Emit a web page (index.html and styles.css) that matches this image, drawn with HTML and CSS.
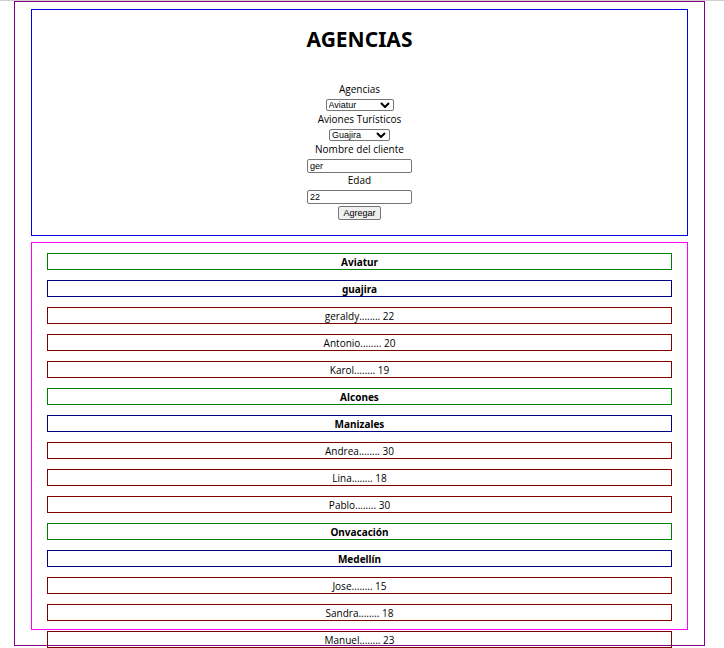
FILE: index.html
```html
<!DOCTYPE html>
<html lang="es">
<head>
  <meta charset="utf-8">
  <title>Agencias</title>
  <link rel="stylesheet" href="styles.css">
</head>
<body>
  <main class="page">
    <section class="panel">
      <h1 class="title">AGENCIAS</h1>
      <form class="form">
        <label class="label" for="agencia">Agencias</label>
        <span class="select-wrap select-agency">
          <select class="select" id="agencia">
            <option selected>Aviatur</option>
            <option>Alcones</option>
            <option>Onvacación</option>
          </select>
          <svg class="chevron" viewBox="0 0 10 6" aria-hidden="true"><path d="M1 1l4 4 4-4"/></svg>
        </span>
        <label class="label" for="avion">Aviones Turísticos</label>
        <span class="select-wrap select-plane">
          <select class="select" id="avion">
            <option selected>Guajira</option>
            <option>Manizales</option>
            <option>Medellín</option>
          </select>
          <svg class="chevron" viewBox="0 0 10 6" aria-hidden="true"><path d="M1 1l4 4 4-4"/></svg>
        </span>
        <label class="label" for="nombre">Nombre del cliente</label>
        <input class="input" id="nombre" type="text" value="ger">
        <label class="label" for="edad">Edad</label>
        <input class="input" id="edad" type="text" value="22">
        <button class="button" type="button">Agregar</button>
      </form>
    </section>
    <section class="list">
      <h2 class="row agency">Aviatur</h2>
      <h3 class="row plane">guajira</h3>
      <p class="row client">geraldy........ 22</p>
      <p class="row client">Antonio........ 20</p>
      <p class="row client">Karol........ 19</p>
      <h2 class="row agency">Alcones</h2>
      <h3 class="row plane">Manizales</h3>
      <p class="row client">Andrea........ 30</p>
      <p class="row client">Lina........ 18</p>
      <p class="row client">Pablo........ 30</p>
      <h2 class="row agency">Onvacación</h2>
      <h3 class="row plane">Medellín</h3>
      <p class="row client">Jose........ 15</p>
      <p class="row client">Sandra........ 18</p>
      <p class="row client">Manuel........ 23</p>
    </section>
  </main>
</body>
</html>
```

FILE: styles.css
```css
* {
  box-sizing: border-box;
}

body {
  min-height: 100vh;
  margin: 0;
  border-top: 1px solid #d0d0d0;
  background: #fff;
  color: #000;
  font-family: "Open Sans", "Noto Sans", sans-serif;
  font-size: 10px;
  line-height: 15px;
  text-align: center;
}

.page {
  display: flex;
  flex-direction: column;
  gap: 6px;
  height: calc(100vh - 3px);
  margin: 0 19px 0 14px;
  padding: 7px 16px 15px;
  border: 1px solid purple;
}

.panel {
  flex: none;
  padding: 13px 16px 16px;
  border: 1px solid #0000e0;
}

.title {
  margin: 0 0 27px;
  font-family: "Noto Sans", sans-serif;
  font-size: 21px;
  line-height: 32px;
}

.form {
  display: flex;
  flex-direction: column;
  align-items: center;
}

.label {
  height: 17px;
  line-height: 15px;
}

.select-wrap {
  position: relative;
  display: flex;
  height: 13px;
}

.select-agency {
  width: 68px;
}

.select-plane {
  width: 61px;
}

.select,
.input,
.button {
  margin: 0;
  border: 1px solid #767676;
  border-radius: 2px;
  background: #fff;
  color: #000;
  font-family: "Liberation Sans", Arial, sans-serif;
  font-size: 9px;
}

.select {
  appearance: none;
  width: 100%;
  height: 12px;
  padding: 0 2px;
  line-height: 10px;
}

.chevron {
  position: absolute;
  top: 3px;
  right: 4px;
  width: 10px;
  height: 6px;
  fill: none;
  stroke: #000;
  stroke-width: 2;
  pointer-events: none;
}

.input {
  width: 105px;
  height: 14px;
  padding: 0 2px;
}

.button {
  height: 14px;
  margin-top: 2px;
  padding: 0 4px;
  background: #efefef;
  line-height: 12px;
}

.list {
  display: flex;
  flex: 1;
  flex-direction: column;
  gap: 10px;
  min-height: 0;
  padding: 10px 15px;
  border: 1px solid magenta;
}

.panel {
  padding-bottom: 15px;
}

.row {
  flex: none;
  margin: 0;
  padding-top: 2px;
  border: 1px solid;
  font-size: 10px;
  line-height: 13px;
}

.agency,
.plane {
  font-family: "Noto Sans", sans-serif;
  font-weight: 700;
}

.agency {
  border-color: green;
}

.plane {
  border-color: #000080;
}

.client {
  border-color: #800000;
}
```
